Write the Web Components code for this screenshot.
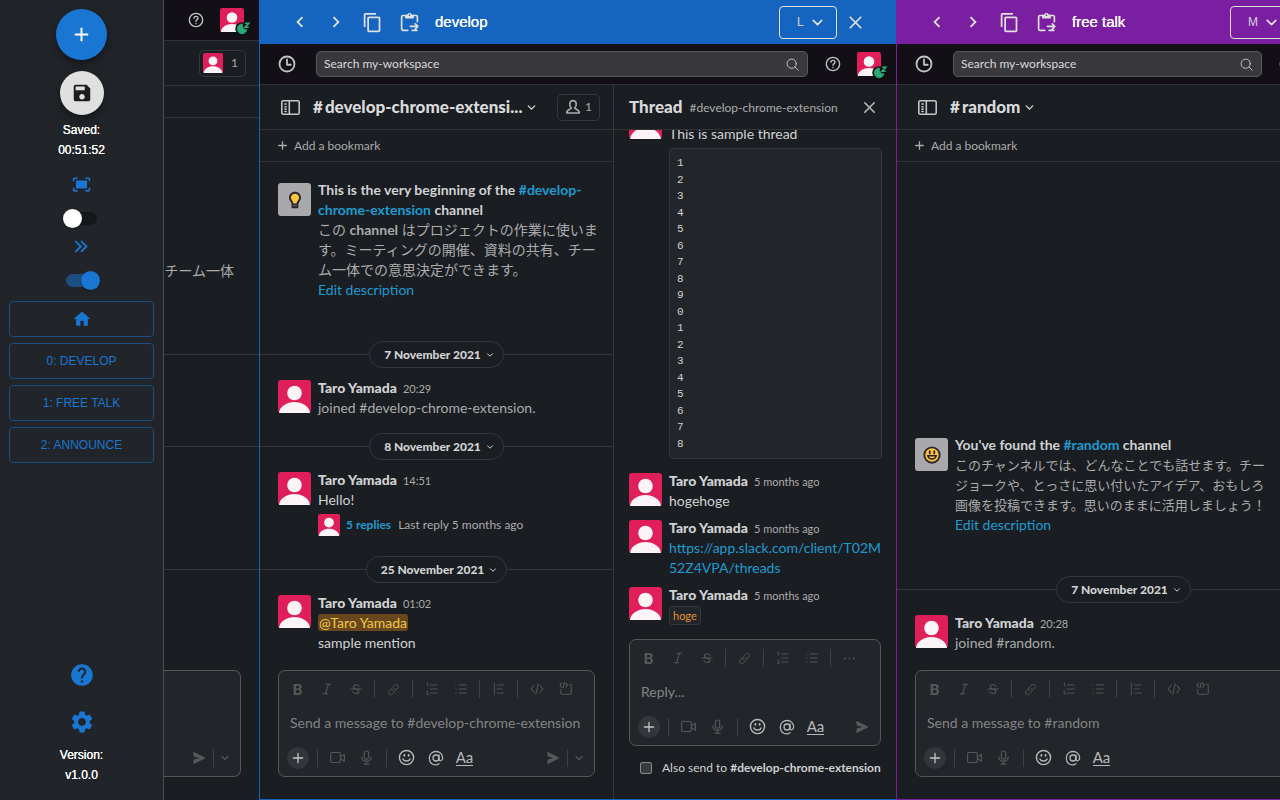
<!DOCTYPE html>
<html lang="en">
<head>
<meta charset="utf-8">
<title>my-workspace deck</title>
<style>
  html, body { margin: 0; height: 100%; }
  body {
    background: #1a1d21;
    color: #d1d2d3;
    font: 14px/20px Lato, "Noto Sans CJK JP", sans-serif;
    overflow: hidden;
  }
  a { color: #1d9bd1; text-decoration: none; }
</style>
</head>
<body>
<deck-app>
  <deck-sidebar slot="sidebar"></deck-sidebar>

  <deck-pane slot="pane" class="home">
    <workspace-bar compact></workspace-bar>
    <channel-bar member-photo></channel-bar>
    <bookmark-bar empty></bookmark-bar>
    <home-feed></home-feed>
    <tail-composer></tail-composer>
  </deck-pane>

  <deck-pane slot="pane" heading="develop" size="L" style="--accent:#1565c0">
    <workspace-bar></workspace-bar>
    <split-view>
      <channel-bar name="develop-chrome-extensi..." members="1"></channel-bar>
      <bookmark-bar></bookmark-bar>
      <message-feed>
        <channel-intro icon="bulb">
          <span slot="title">This is the very beginning of the <a href="#develop">#develop-<br>chrome-extension</a> channel</span>
          この <b>channel</b> はプロジェクトの作業に使いま<br>す。ミーティングの開催、資料の共有、チー<br>ム一体での意思決定ができます。
        </channel-intro>
        <date-divider>7 November 2021</date-divider>
        <chat-message time="20:29" quiet>joined #develop-chrome-extension.</chat-message>
        <date-divider>8 November 2021</date-divider>
        <chat-message time="14:51">Hello!<reply-summary slot="replies"></reply-summary></chat-message>
        <date-divider>25 November 2021</date-divider>
        <chat-message time="01:02"><user-mention>@Taro Yamada</user-mention><br>sample mention</chat-message>
      </message-feed>
      <message-composer prompt="Send a message to #develop-chrome-extension" full schedule></message-composer>
      <thread-panel slot="thread"></thread-panel>
    </split-view>
  </deck-pane>

  <deck-pane slot="pane" heading="free talk" size="M" class="clipped" style="--accent:#7b1fa2">
    <workspace-bar></workspace-bar>
    <channel-bar name="random"></channel-bar>
    <bookmark-bar></bookmark-bar>
    <message-feed>
      <channel-intro icon="smile" dense>
        <span slot="title">You've found the <a href="#random">#random</a> channel</span>
        このチャンネルでは、どんなことでも話せます。チー<br>ジョークや、とっさに思い付いたアイデア、おもしろ<br>画像を投稿できます。思いのままに活用しましょう！
      </channel-intro>
      <date-divider>7 November 2021</date-divider>
      <chat-message time="20:28" quiet>joined #random.</chat-message>
    </message-feed>
    <message-composer prompt="Send a message to #random" full schedule></message-composer>
  </deck-pane>
</deck-app>

<script>
const BASE = `
  *, *::before, *::after { box-sizing: border-box; }
  button { font: inherit; color: inherit; background: none; border: 0; padding: 0; margin: 0;
    display: inline-flex; align-items: center; justify-content: center; cursor: pointer; }
  input, textarea, select { font: inherit; color: inherit; margin: 0; }
  a { color: #1d9bd1; text-decoration: none; }
`;

function define(tag, css, markup) {
  customElements.define(tag, class extends HTMLElement {
    constructor() {
      super();
      this.attachShadow({ mode: 'open' });
    }
    connectedCallback() {
      this.shadowRoot.innerHTML = `<style>${BASE}${css}</style>${markup(this)}`;
    }
  });
}

/* Icons on a 24-unit grid. Line icons stroke with currentColor. */
const line = (body, w = 2) => `<g fill="none" stroke="currentColor" stroke-width="${w}" stroke-linecap="round" stroke-linejoin="round">${body}</g>`;
const ICONS = {
  add: '<path d="M19 13h-6v6h-2v-6H5v-2h6V5h2v6h6v2z"/>',
  save: '<path d="M17 3H5c-1.11 0-2 .9-2 2v14c0 1.1.89 2 2 2h14c1.1 0 2-.9 2-2V7l-4-4zm-5 16c-1.66 0-3-1.34-3-3s1.34-3 3-3 3 1.34 3 3-1.34 3-3 3zm3-10H5V5h10v4z"/>',
  fit: '<path d="M5 7h14v10H5zM17 3h4c1 0 2 1 2 2v3h-2V5h-4zM1 8V5c0-1 1-2 2-2h4v2H3v3zM7 21H3c-1 0-2-1-2-2v-3h2v3h4zM23 16v3c0 1-1 2-2 2h-4v-2h4v-3z"/>',
  dblright: line('<path d="M4 5l7 7-7 7M12 5l7 7-7 7"/>', 2.6),
  home: '<path d="M10 20v-6h4v6h5v-8h3L12 3 2 12h3v8z"/>',
  help: '<path d="M12 2C6.48 2 2 6.48 2 12s4.480 10 10 10 10-4.480 10-10S17.520 2 12 2zm1 17h-2v-2h2v2zm2.070-7.750l-.9.920C13.450 12.900 13 13.500 13 15h-2v-.5c0-1.100.450-2.100 1.170-2.830l1.240-1.260c.370-.360.590-.860.590-1.410 0-1.100-.9-2-2-2s-2 .9-2 2H8c0-2.210 1.790-4 4-4s4 1.790 4 4c0 .880-.360 1.680-.930 2.250z"/>',
  gear: '<path d="M19.14 12.94c.04-.3.06-.61.06-.94 0-.32-.02-.64-.07-.94l2.03-1.58c.18-.14.23-.41.12-.61l-1.92-3.32c-.12-.22-.37-.29-.59-.22l-2.39.96c-.5-.38-1.03-.7-1.62-.94l-.36-2.54c-.04-.24-.24-.41-.48-.41h-3.84c-.24 0-.43.17-.47.41l-.36 2.54c-.59.24-1.13.57-1.62.94l-2.39-.96c-.22-.08-.47 0-.59.22L2.74 8.87c-.12.21-.08.47.12.61l2.03 1.58c-.05.3-.09.63-.09.94s.02.64.07.94l-2.03 1.58c-.18.14-.23.41-.12.61l1.92 3.32c.12.22.37.29.59.22l2.39-.96c.5.38 1.03.7 1.62.94l.36 2.54c.05.24.24.41.48.41h3.84c.24 0 .44-.17.47-.41l.36-2.54c.59-.24 1.13-.56 1.62-.94l2.39.96c.22.08.47 0 .59-.22l1.92-3.32c.12-.22.07-.47-.12-.61l-2.01-1.58zM12 15.6c-1.98 0-3.6-1.62-3.6-3.6s1.62-3.6 3.6-3.6 3.6 1.62 3.6 3.6-1.62 3.6-3.6 3.6z"/>',
  left: '<path d="M15.41 7.41 14 6l-6 6 6 6 1.41-1.41L10.83 12z"/>',
  right: '<path d="M10 6 8.59 7.41 13.17 12l-4.58 4.59L10 18l6-6z"/>',
  copy: '<path d="M16 1H4c-1.1 0-2 .9-2 2v14h2V3h12V1zm3 4H8c-1.1 0-2 .9-2 2v14c0 1.1.9 2 2 2h11c1.1 0 2-.9 2-2V7c0-1.1-.9-2-2-2zm0 16H8V7h11v14z"/>',
  paste: line('<path d="M10 21H4.500c-.8 0-1.500-.7-1.500-1.500v-14C3 4.700 3.700 4 4.500 4h15c.8 0 1.500.7 1.500 1.500V11M20.500 21H15M13 16.500h8M18.500 13.500l3 3-3 3"/>', 1.9) + '<path d="M7 3h2.500c.5-2.500 4.500-2.500 5 0H17v4.500H7z"/><circle cx="12" cy="3.600" r=".9" fill="var(--accent)"/>',
  close: line('<path d="M6 6l12 12M18 6L6 18"/>'),
  down: line('<path d="M6 9l6 6 6-6"/>', 2.4),
  clock: line('<circle cx="12" cy="12" r="10"/><path d="M12 6v7h5"/>', 2.4),
  search: line('<circle cx="10.500" cy="10.500" r="8.500"/><path d="M17 17l5.500 5.500"/>', 1.8),
  ask: line('<circle cx="12" cy="12" r="10"/><path d="M9 9.500c0-4 6-4 6 0 0 2-3 2-3 4.500M12 17.300v.2"/>', 2),
  layout: line('<rect x="1" y="3.500" width="22" height="17" rx="2"/><path d="M10.500 4v16M5 7.500h1.500M5 11h1.500M5 14h1.500M5 17h1.500"/>', 2),
  person: line('<path d="M9.500 13.500C6 11 6 2.500 12 2.500s6 8.500 2.500 11c0 2 6.500 1.500 7 7.500h-19c.5-6 7-5.500 7-7.500z"/>', 2.4),
  plus: line('<path d="M12 4v16M4 12h16"/>', 2.2),
  bookplus: line('<path d="M12 2v20M2 12h20"/>', 3.4),
  italic: line('<path d="M10 4h8M5 20h8M14.500 4l-5 16"/>', 1.8),
  strike: line('<path d="M17 7.500C16 4 7.500 3.500 7.500 8c0 2 1.500 3 4.500 4s5 2 5 4.500c0 4.500-9 4.500-10.500 0M3 12h18"/>', 1.8),
  link: line('<path d="M10 14c-3-3 0-6 1-7l3-3c4-4 9 1 6 5l-3.500 3.500M14 10c3 3 0 6-1 7l-3 3c-4 4-9-1-6-5l3.500-3.500"/>', 1.8),
  ol: line('<path d="M9 5h12M9 12h12M9 19h12M3 3l1.500-1v5M2.500 16c3-2 4 1 0 5h3.500"/>', 1.5),
  ul: line('<path d="M9 5h12M9 12h12M9 19h12M3 5h.5M3 12h.5M3 19h.5"/>', 1.7),
  quote: line('<path d="M4 2v20M9 5h12M9 12h9M9 19h12"/>', 1.5),
  code: line('<path d="M7 6l-5 6 5 6M17 6l5 6-5 6M14 3l-4 18"/>', 1.8),
  block: line('<path d="M4.500 2L1.500 5.500l3 3.500M11.500 2l3 3.500-3 3.500M9 1L7 10M3 13v6c0 1.200.8 2 2 2h14c1.200 0 2-.8 2-2V6c0-1.200-.8-2-2-2h-1"/>', 1.8),
  more: '<circle cx="4" cy="12" r="1.8"/><circle cx="12" cy="12" r="1.8"/><circle cx="20" cy="12" r="1.8"/>',
  video: line('<rect x="1" y="4" width="15.500" height="16" rx="2"/><path d="M17 11l6-4v11l-6-4"/>', 1.8),
  mic: line('<rect x="8.500" y="1.500" width="7" height="13" rx="3.500"/><path d="M4.500 11c0 9 15 9 15 0M12 18v4.500M8 22.500h8"/>', 1.8),
  smile: line('<circle cx="12" cy="12" r="10"/><path d="M7 14c1.500 4 8.500 4 10 0"/><path d="M9 8.500v1M15 8.500v1" stroke-width="2.600"/>', 2),
  at: line('<circle cx="12" cy="12" r="4.500"/><path d="M16.500 7.500v6c0 4 5.500 3.500 5.500-1.500 0-13-20-13-20 0 0 10 9 12 14.500 8.500"/>', 1.9),
  send: '<path d="M2 3c0-1 1-1.500 2-1l18 9c1 .5 1 1.500 0 2L4 22c-1 .5-2 0-2-1l1-6.500L13 12 3 9.500z"/>',
  bulb: '<path d="M12 1C7.500 1 4 4.500 4 9c0 3 2 4.800 3 6.500.5 1 .5 2 .5 3v3c0 .8.500 1.500 1.500 1.500h6c1 0 1.500-.7 1.500-1.500v-3c0-1 0-2 .5-3 1-1.700 3-3.500 3-6.500C20 4.500 16.500 1 12 1z" fill="#2b2331"/><path d="M12 3.500c-3.300 0-5.500 2.500-5.500 5.500 0 3 3 4 3.500 7.500h4c.5-3.500 3.500-4.500 3.500-7.500 0-3-2.200-5.500-5.500-5.500z" fill="#fcc53b"/><path d="M9.500 19.500h5" stroke="#777" stroke-width="1.200"/>',
  grin: '<circle cx="12" cy="12" r="11.500" fill="#2b2331"/><circle cx="12" cy="12" r="9" fill="#fcc53b"/><path d="M6.500 13.500c1.500 5 9.500 5 11 0M6 13h12" fill="none" stroke="#2b2331" stroke-width="2" stroke-linecap="round"/><path d="M9 7v3M15 7v3" stroke="#2b2331" stroke-width="2.400" stroke-linecap="round"/>'
};

define('ui-icon', `
  :host { display: inline-flex; flex: none; }
  svg { display: block; fill: currentColor; overflow: visible; }
`, el => {
  const s = el.getAttribute('size') || 16;
  return `<svg width="${s}" height="${s}" viewBox="0 0 24 24" aria-hidden="true">${ICONS[el.getAttribute('name')]}</svg>`;
});

define('user-avatar', `
  :host { display: block; flex: none; }
  svg { display: block; overflow: visible; }
`, el => {
  const s = el.getAttribute('size') || 33;
  const presence = el.hasAttribute('presence') ? `
    <circle cx="30" cy="28.500" r="9" fill="#121016"/>
    <path d="M31 22a6.700 6.700 0 1 0 6 8c-3.500.5-7-2.500-6-8z" fill="#2bac76" stroke="#2bac76"/>
    <path d="M34.500 21h5l-5 5.500h5" fill="none" stroke="#2bac76" stroke-width="2.200"/>` : '';
  return `<svg width="${s}" height="${s}" viewBox="0 0 33 33" role="img" aria-label="Profile photo">
    <rect width="33" height="33" rx="3" fill="#e01e5a"/>
    <circle cx="16.500" cy="13" r="7.300" fill="#fdf4f7"/>
    <path d="M1 33c.8-7 8-11 15.500-11S31.200 26 32 33z" fill="#fdf4f7"/>${presence}</svg>`;
});

define('deck-app', `
  :host { display: grid; grid-template-columns: 164px minmax(0, 1fr); height: 100vh; }
  .panes { display: grid; grid-template-columns: 95px minmax(0, 637fr) minmax(0, 384fr);
    grid-template-rows: minmax(0, 1fr); min-width: 0; overflow: hidden; }
  ::slotted(deck-pane) { min-width: 0; }
  ::slotted(deck-pane.clipped) { min-width: 454px; }
`, () => `<slot name="sidebar"></slot><main class="panes"><slot name="pane"></slot></main>`);

define('deck-sidebar', `
  :host { display: flex; flex-direction: column; align-items: center; padding: 9px;
    background: #212529; border-right: 1px solid #4b4e51; color: #fff; box-sizing: border-box;
    font: 12px/20px "Liberation Sans", Arial, sans-serif; min-height: 0; }
  .fab { width: 51px; height: 51px; border-radius: 50%; background: #1976d2; color: #fff; flex: none;
    box-shadow: 0 3px 5px rgba(0,0,0,.3), 0 6px 14px rgba(0,0,0,.18); }
  .save { width: 44px; height: 44px; margin-top: 11px; background: #e0e0e0; color: #1c1c1c; }
  p { margin: 0; text-align: center; font-weight: 500; text-shadow: 0 0 0 #fff; }
  .saved { margin-top: 5px; }
  ui-icon { color: inherit; }
  .mode { color: #1976d2; height: 24px; display: flex; align-items: center; margin-top: 9px; }
  .mode.first { margin-top: 12px; }
  input { appearance: none; flex: none; position: relative; width: 31px; height: 13px; margin-top: 16px;
    border-radius: 7px; background: #15181b; }
  input::before { content: ""; position: absolute; width: 19px; height: 19px; left: -3px; top: -3px;
    border-radius: 50%; background: #fff; box-shadow: 0 1px 2px rgba(0,0,0,.4); }
  input:checked { background: #1d4e80; }
  input:checked::before { left: 15px; background: #1976d2; }
  nav { display: flex; flex-direction: column; gap: 6px; align-self: stretch; margin-top: 14px; }
  nav button { height: 36px; border: 1px solid #1b4d80; border-radius: 4px; color: #1976d2; }
  .foot { margin-top: auto; display: flex; flex-direction: column; align-items: center; padding-bottom: 6px; }
  .foot button { color: #1976d2; height: 47px; width: 47px; }
`, () => `
  <button class="fab" aria-label="Add column"><ui-icon name="add" size="23"></ui-icon></button>
  <button class="fab save" aria-label="Save"><ui-icon name="save" size="22"></ui-icon></button>
  <p class="saved">Saved:</p><p>00:51:52</p>
  <label class="mode first" for="fit"><ui-icon name="fit" size="19"></ui-icon></label>
  <input type="checkbox" id="fit" aria-label="Fit to screen">
  <label class="mode" for="scroll"><ui-icon name="dblright" size="17"></ui-icon></label>
  <input type="checkbox" id="scroll" aria-label="Smooth scroll" checked>
  <nav aria-label="Columns">
    <button aria-label="Home"><ui-icon name="home" size="20"></ui-icon></button>
    <button>0: DEVELOP</button>
    <button>1: FREE TALK</button>
    <button>2: ANNOUNCE</button>
  </nav>
  <div class="foot">
    <button aria-label="Help"><ui-icon name="help" size="26"></ui-icon></button>
    <button aria-label="Settings"><ui-icon name="gear" size="26"></ui-icon></button>
    <p>Version:</p><p>v1.0.0</p>
  </div>`);

define('deck-pane', `
  :host { display: flex; flex-direction: column; min-height: 0; overflow: hidden; background: #1a1d21; }
  header { flex: none; display: flex; align-items: center; height: 44px; padding: 0 23px;
    background: var(--accent); color: #e0e0e0; }
  header button { width: 36px; height: 36px; }
  header button.wide { width: 37px; }
  h2 { margin: 0 auto 0 7px; color: #fff; font: 500 15px/20px "Liberation Sans", Arial, sans-serif; text-shadow: 0 0 0 #fff; }
  .pick { position: relative; }
  select { appearance: none; height: 33px; padding: 0 32px 0 17px; border: 1px solid #e0e0e0; border-radius: 4px;
    background: transparent; color: #d0d4da; font: 12px/16px "Liberation Sans", Arial, sans-serif; }
  .pick ui-icon { position: absolute; right: 11px; top: 8px; pointer-events: none; }
  .body { flex: 1; min-height: 0; display: flex; flex-direction: column;
    border-left: 1px solid var(--accent); border-bottom: 1px solid var(--accent); }
  .plain { border: 0; }
`, el => {
  const title = el.getAttribute('heading'), size = el.getAttribute('size');
  return title ? `
  <header>
    <button aria-label="Back"><ui-icon name="left" size="22"></ui-icon></button>
    <button aria-label="Forward"><ui-icon name="right" size="22"></ui-icon></button>
    <button class="wide" aria-label="Copy"><ui-icon name="copy" size="21"></ui-icon></button>
    <button class="wide" aria-label="Paste and go"><ui-icon name="paste" size="21"></ui-icon></button>
    <h2>${title}</h2>
    <span class="pick"><select aria-label="Column width"><option>${size}</option></select><ui-icon name="down" size="17"></ui-icon></span>
    <button aria-label="Close column"><ui-icon name="close" size="21"></ui-icon></button>
  </header>
  <div class="body"><slot></slot></div>` : `<div class="body plain"><slot></slot></div>`;
});

define('workspace-bar', `
  :host { flex: none; display: flex; align-items: center; height: 41px; box-sizing: border-box;
    padding: 0 15px 0 18px; background: #121016; border-bottom: 1px solid #313337; color: #c4c3c6; }
  .search { flex: 1; min-width: 0; display: flex; align-items: center; height: 26px; margin: 0 17px 0 20px;
    padding: 0 8px 0 7px; background: #39383d; border: 1px solid #59585d; border-radius: 5px; }
  input { flex: 1; min-width: 0; border: 0; padding: 0; background: none; outline: 0; font-size: 12px; line-height: 16px; }
  input::placeholder { color: #d9d9da; opacity: 1; }
  user-avatar { margin-left: 16px; }
  .end { display: flex; align-items: center; margin-left: auto; }
`, el => `
  ${el.hasAttribute('compact') ? '' : `
  <button aria-label="History"><ui-icon name="clock" size="18"></ui-icon></button>
  <div class="search"><input type="search" aria-label="Search my-workspace" placeholder="Search my-workspace"><ui-icon name="search" size="13"></ui-icon></div>`}
  <div class="end"><button aria-label="Help"><ui-icon name="ask" size="16"></ui-icon></button>
  <user-avatar size="24" presence></user-avatar></div>`);

define('channel-bar', `
  :host { flex: none; display: flex; align-items: center; height: 45px; box-sizing: border-box;
    padding: 0 13px 0 21px; border-bottom: 1px solid #313337; color: #c4c5c7; }
  h1 { display: flex; gap: 2px; align-items: center; margin: 0 0 0 13px; font: 900 17px/24px Lato, sans-serif; white-space: nowrap; color: #d9dadb; }
  h1 ui-icon { margin-left: 1px; }
  .members { height: 27px; margin-left: auto; padding: 0 7px; gap: 4px; border: 1px solid #35383c; border-radius: 5px;
    color: #ababad; font-size: 12px; }
  .photo { padding: 0 7px 0 3px; gap: 8px; }
`, el => {
  const name = el.getAttribute('name'), members = el.getAttribute('members');
  if (el.hasAttribute('member-photo'))
    return `<button class="members photo"><user-avatar size="20"></user-avatar>1</button>`;
  return `
  <button aria-label="Toggle sidebar"><ui-icon name="layout" size="19"></ui-icon></button>
  <h1><span>#</span><span>${name}</span><ui-icon name="down" size="13"></ui-icon></h1>
  ${members ? `<button class="members"><ui-icon name="person" size="16"></ui-icon>${members}</button>` : ''}`;
});

define('bookmark-bar', `
  :host { flex: none; display: flex; align-items: center; height: 32px; box-sizing: border-box;
    padding: 0 18px; border-bottom: 1px solid #313337; color: #ababad; font-size: 12px; line-height: 16px; }
  button { gap: 7px; }
`, el => el.hasAttribute('empty') ? '' : `<button><ui-icon name="bookplus" size="9"></ui-icon>Add a bookmark</button>`);

define('message-feed', `
  :host { flex: 1; min-height: 0; display: flex; flex-direction: column; justify-content: flex-end;
    overflow: hidden; padding-bottom: 9px; }
`, () => `<slot></slot>`);

define('channel-intro', `
  :host { display: flex; gap: 7px; padding: 0 18px; margin-bottom: 34px; color: #ababad; white-space: nowrap; }
  .pic { flex: none; display: flex; align-items: center; justify-content: center; width: 33px; height: 33px; margin-top: 3px;
    border-radius: 3px; background: #a9a9ab; }
  .title { font-weight: 700; color: #d1d2d3; }
  :host([dense]) .about { font-size: 13px; }
`, el => `
  <div class="pic"><ui-icon name="${el.getAttribute('icon') === 'bulb' ? 'bulb' : 'grin'}" size="18"></ui-icon></div>
  <div><div class="title"><slot name="title"></slot></div><div class="about"><slot></slot></div><a href="#edit">Edit description</a></div>`);

define('date-divider', `
  :host { flex: none; display: flex; align-items: center; margin: 7px 0 6px; }
  :host::before, :host::after { content: ""; flex: 1; height: 1px; background: #35373b; }
  button { height: 27px; padding: 0 8px 0 14px; gap: 4px; border: 1px solid #35373b; border-radius: 14px;
    font-weight: 900; font-size: 12px; line-height: 16px; }
`, () => `<button><span><slot></slot></span><ui-icon name="down" size="10"></ui-icon></button>`);

define('chat-message', `
  :host { flex: none; display: flex; gap: 7px; padding: 4px 18px 8px; }
  :host([thread]) { padding: 3px 14px 4px 15px; }
  user-avatar { margin-top: 2px; }
  .main { flex: 1; min-width: 0; }
  .by { display: flex; align-items: baseline; gap: 6px; height: 20px; }
  b { font-weight: 900; }
  time { font-size: 11px; color: #ababad; }
  :host([quiet]) .text { color: #ababad; }
`, el => {
  const time = el.getAttribute('time');
  return `
  <user-avatar></user-avatar>
  <div class="main"><div class="by">${time ? `<b>Taro Yamada</b><time>${time}</time>` : ''}</div>
  <div class="text"><slot></slot></div><slot name="replies"></slot></div>`;
});

define('user-mention', `
  :host { display: inline; background: #68471f; color: #f2c744; border-radius: 3px; padding: 0 1px; }
`, () => `<slot></slot>`);

define('reply-summary', `
  :host { display: flex; align-items: center; height: 23px; margin: 3px 0 5px; font-size: 12px; line-height: 16px; color: #ababad; }
  a { font-weight: 700; margin: 0 7px 0 6px; }
`, () => `<user-avatar size="22"></user-avatar><a href="#thread">5 replies</a><span>Last reply 5 months ago</span>`);

define('message-composer', `
  :host { flex: none; display: flex; flex-direction: column; margin: 0 18px 22px; background: #222529;
    border: 1px solid #565856; border-radius: 7px; color: #56585b; }
  .row { display: flex; align-items: center; height: 36px; padding: 0 4px; }
  .row button { width: 29px; height: 26px; }
  .bold { font-weight: 900; font-size: 15px; }
  i { width: 1px; height: 18px; margin: 0 4px; background: #3d4044; }
  textarea { display: block; resize: none; height: 32px; padding: 6px 11px; border: 0; outline: 0; background: none;
    line-height: 20px; overflow: hidden; white-space: nowrap; }
  textarea::placeholder { color: #838487; opacity: 1; }
  .actions { height: 37px; }
  .actions i { margin: 0 5px; }
  .plus { color: #c4c5c7; }
  .plus span { display: flex; align-items: center; justify-content: center; width: 22px; height: 22px; border-radius: 50%; background: #323539; }
  .lit { color: #b8b9bb; }
  .aa span { font-size: 15px; line-height: 16px; border-bottom: 1px solid; }
  .actions .send { margin-left: auto; }
  .actions .later { width: 22px; }
  .actions i.tight { margin: 0; }
`, el => {
  const b = (label, icon, size = 15, cls = '') => `<button class="${cls}" aria-label="${label}"><ui-icon name="${icon}" size="${size}"></ui-icon></button>`;
  return `
  <div class="row">
    <button class="bold" aria-label="Bold">B</button>${b('Italic', 'italic', 14)}${b('Strikethrough', 'strike', 14)}<i></i>
    ${b('Link', 'link', 13)}<i></i>${b('Ordered list', 'ol', 14)}${b('Bulleted list', 'ul', 14)}<i></i>
    ${el.hasAttribute('full') ? b('Block quote', 'quote', 14) + '<i></i>' + b('Code', 'code', 14) + b('Code block', 'block', 14) : b('More', 'more', 13)}
  </div>
  <textarea rows="1" aria-label="${el.getAttribute('prompt')}" placeholder="${el.getAttribute('prompt')}"></textarea>
  <div class="row actions">
    <button class="plus" aria-label="Attach"><span><ui-icon name="plus" size="14"></ui-icon></span></button><i></i>
    ${b('Record video', 'video', 15)}${b('Record audio', 'mic', 15)}<i></i>
    ${b('Emoji', 'smile', 17, 'lit')}${b('Mention', 'at', 16, 'lit')}<button class="lit aa" aria-label="Formatting"><span>Aa</span></button>
    ${b('Send', 'send', 14, 'send')}${el.hasAttribute('schedule') ? '<i class="tight"></i>' + b('Schedule', 'down', 12, 'later') : ''}
  </div>`;
});

define('split-view', `
  :host { flex: 1; min-height: 0; display: grid; grid-template-columns: minmax(0, 353fr) minmax(0, 283fr); grid-template-rows: minmax(0, 1fr); }
  section { display: flex; flex-direction: column; min-height: 0; min-width: 0; }
`, () => `<section><slot></slot></section><slot name="thread"></slot>`);

define('thread-panel', `
  :host { display: flex; flex-direction: column; min-height: 0; min-width: 0; border-left: 1px solid #35373b; }
  header { flex: none; display: flex; align-items: center; height: 45px; padding: 0 18px 0 15px; border-bottom: 1px solid #313337; }
  h2 { margin: 0 7px 0 0; font: 900 17px/24px Lato, sans-serif; color: #d9dadb; }
  header span { font-size: 12px; line-height: 16px; padding-top: 2px; color: #ababad; white-space: nowrap; }
  header button { width: 18px; height: 24px; margin-left: auto; color: #b8b9bb; }
  message-feed { padding-bottom: 10px; }
  pre { margin: 4px 0 5px; padding: 6px 7px; border: 1px solid #35373b; border-radius: 4px; background: #222529;
    font: 11px/1.5 "Liberation Mono", monospace; color: #d1d2d3; }
  code { padding: 2px 3px; border: 1px solid #35373b; border-radius: 3px; background: #222529; color: #e8912d; font: 11px/16px Lato, sans-serif; }
  message-composer { margin: 0 15px; }
  label { flex: none; display: flex; align-items: center; gap: 10px; height: 44px; padding: 0 0 0 26px; margin-bottom: 9px; font-size: 12px; white-space: nowrap; }
  input { appearance: none; flex: none; width: 12px; height: 12px; border: 1px solid #87888a; border-radius: 2px; background: #3b3b3b; }
`, () => `
  <header><h2>Thread</h2><span>#develop-chrome-extension</span><button aria-label="Close thread"><ui-icon name="close" size="19"></ui-icon></button></header>
  <message-feed>
    <chat-message thread>This is sample thread<pre>${[1,2,3,4,5,6,7,8,9,0,1,2,3,4,5,6,7,8].join('\n')}</pre></chat-message>
    <chat-message thread time="5 months ago">hogehoge</chat-message>
    <chat-message thread time="5 months ago"><a href="#threads">https://app.slack.com/client/T02M<br>52Z4VPA/threads</a></chat-message>
    <chat-message thread time="5 months ago"><code>hoge</code></chat-message>
  </message-feed>
  <message-composer prompt="Reply..."></message-composer>
  <label><input type="checkbox"><span>Also send to <b>#develop-chrome-extension</b></span></label>`);

define('home-feed', `
  :host { flex: 1; min-height: 0; display: flex; flex-direction: column; justify-content: flex-end; color: #ababad; }
  p { margin: 0 25px 73px 0; text-align: right; white-space: nowrap; }
  hr { width: 100%; height: 1px; margin: 0 0 91px; border: 0; background: #35373b; flex: none; }
  .second { margin-bottom: 122px; }
  .last { margin-bottom: 100px; }
`, () => `<p>チーム一体</p><hr><hr class="second"><hr class="last">`);

define('tail-composer', `
  :host { flex: none; display: flex; align-items: flex-end; justify-content: flex-end; height: 107px; box-sizing: border-box;
    margin: 0 18px 23px 0; padding: 0 5px 5px 0; background: #222529; color: #56585b;
    border: 1px solid #565856; border-left: 0; border-radius: 0 7px 7px 0; }
  button { width: 29px; height: 26px; }
  .later { width: 22px; border-left: 1px solid #3d4044; height: 18px; margin-bottom: 4px; }
`, () => `<button aria-label="Send"><ui-icon name="send" size="14"></ui-icon></button><button class="later" aria-label="Schedule"><ui-icon name="down" size="12"></ui-icon></button>`);
</script>
</body>
</html>
